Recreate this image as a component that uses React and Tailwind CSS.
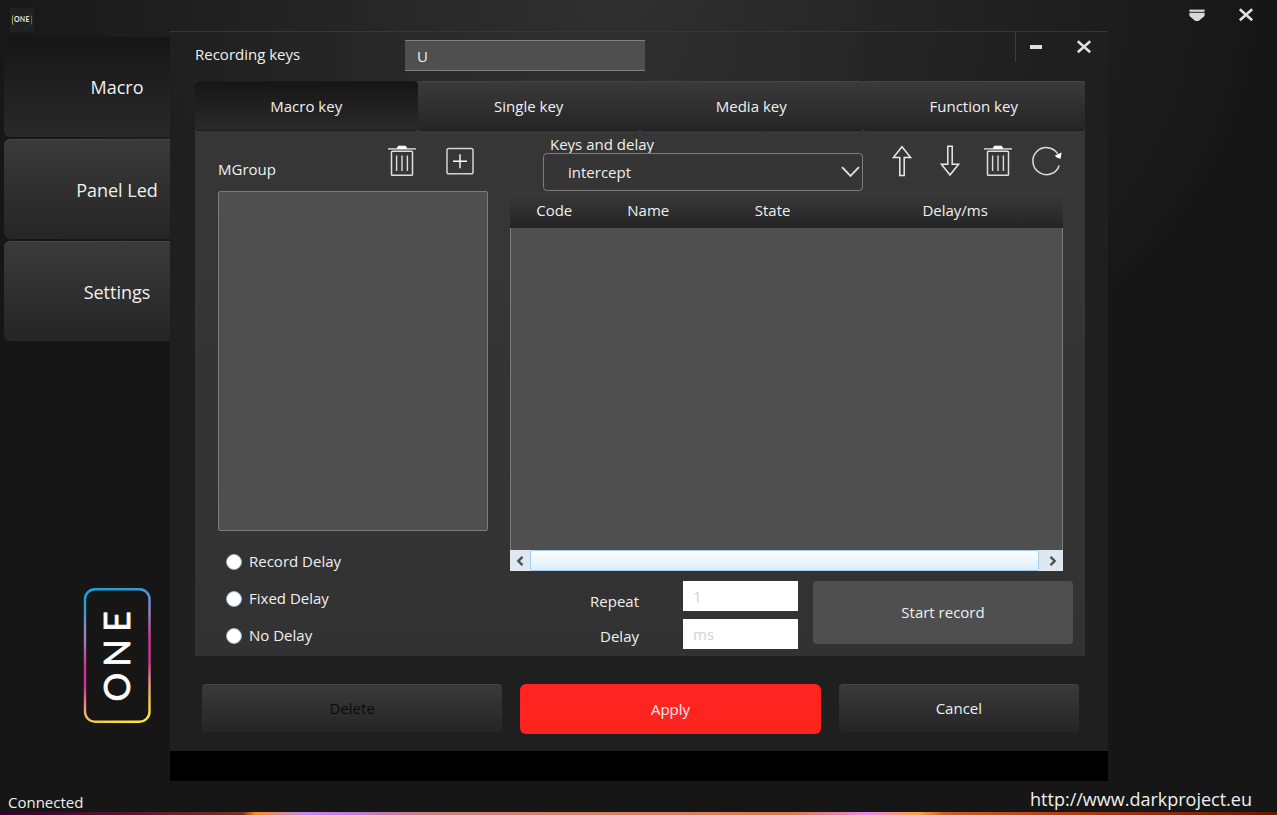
import { useState } from "react";

const raised =
  "bg-linear-to-b from-[#3a3a3a] to-[#252525] border-t border-t-[#464646]";

function TrashIcon() {
  return (
    <svg width="30" height="32" viewBox="0 0 30 32" fill="none" stroke="#dedede" aria-hidden="true">
      <path d="M1 3.9H29" strokeWidth="1.4" />
      <path d="M10.2 3.4 11.4 1.2H18.6L19.8 3.4Z" fill="#fff" stroke="#fff" strokeWidth="1" />
      <rect x="4.5" y="6.3" width="21" height="24" rx="0.8" strokeWidth="1.5" />
      <path d="M9.6 10.5V26M15 10.5V26M20.4 10.5V26" strokeWidth="1.4" />
    </svg>
  );
}

function AddIcon() {
  return (
    <svg width="28" height="28" viewBox="0 0 28 28" fill="none" aria-hidden="true">
      <rect x="1" y="1.4" width="26" height="25.4" rx="1.8" stroke="#d4d4d4" strokeWidth="1.5" />
      <path d="M14 7.2V21.2M7 14.2H21" stroke="#fff" strokeWidth="1.4" />
    </svg>
  );
}

function UpIcon() {
  return (
    <svg width="22" height="32" viewBox="0 0 22 32" fill="none" stroke="#eaeaea" strokeWidth="1.5" aria-hidden="true">
      <path d="M11 1.8 19.6 12.6H13.2V30.5H8.8V12.6H2.4Z" />
    </svg>
  );
}

function DownIcon() {
  return (
    <svg width="22" height="32" viewBox="0 0 22 32" fill="none" stroke="#eaeaea" strokeWidth="1.5" aria-hidden="true">
      <path d="M11 30 19.6 19.2H13.2V1.3H8.8V19.2H2.4Z" />
    </svg>
  );
}

function RefreshIcon() {
  return (
    <svg width="32" height="32" viewBox="0 0 32 32" fill="none" aria-hidden="true">
      <path d="M29.2 20.4A13.5 13.5 0 1 1 27.6 8.6" stroke="#dedede" strokeWidth="1.5" />
      <path d="M24.8 10.4 31.6 7.4 30.6 13.8 27 12.8Z" fill="#fff" />
    </svg>
  );
}

function CloseIcon() {
  return (
    <svg width="16" height="14" viewBox="0 0 16 14" fill="none" aria-hidden="true">
      <path d="M1.8 1.2 14.2 12.2M14.2 1.2 1.8 12.2" stroke="#e2e2e2" strokeWidth="2.5" />
    </svg>
  );
}

function TrayIcon() {
  return (
    <svg width="16" height="14" viewBox="0 0 16 14" fill="#d8d8d8" aria-hidden="true">
      <path d="M0.4 1.6H15.6V3.8H0.4Z" />
      <path d="M0.4 4.8H15.6V8L9.6 13H6.4L0.4 8Z" />
    </svg>
  );
}

function BrandMark() {
  return (
    <svg width="24" height="24" viewBox="0 0 24 24" fontFamily="Lato, sans-serif" aria-hidden="true">
      <rect width="24" height="24" fill="#212121" />
      <path d="M3.6 7.5Q2.4 8 2.4 9V15Q2.4 16 3.8 16.4" fill="none" stroke="#c9a227" strokeWidth="1" />
      <path d="M20.4 7.5Q21.6 8 21.6 9V15Q21.6 16 20.4 16.4" fill="none" stroke="#2a7ba6" strokeWidth="1" />
      <g fontSize="7" fontWeight="700" fill="#f0f0f0" textAnchor="middle">
        <text x="6.8" y="14.2">O</text>
        <text x="12.4" y="14.2" fill="#cfcfcf">N</text>
        <text x="17.4" y="14.2">E</text>
      </g>
    </svg>
  );
}

function BrandLogo() {
  return (
    <svg width="68" height="136" viewBox="0 0 68 136" fontFamily="Lato, sans-serif" role="img" aria-label="ONE">
      <defs>
        <linearGradient id="edge" gradientUnits="userSpaceOnUse" x1="8" y1="0" x2="60" y2="136">
          <stop offset="0" stopColor="#12a5e0" />
          <stop offset="0.12" stopColor="#2f9bd6" />
          <stop offset="0.3" stopColor="#9a86c4" />
          <stop offset="0.5" stopColor="#d4308c" />
          <stop offset="0.62" stopColor="#d4308c" />
          <stop offset="0.76" stopColor="#eb9a86" />
          <stop offset="0.96" stopColor="#ffe82a" />
        </linearGradient>
      </defs>
      <rect x="2" y="2.2" width="64.5" height="132.5" rx="10" fill="none" stroke="url(#edge)" strokeWidth="2.4" />
      <g fill="#fff" stroke="#fff" strokeWidth="0.7" fontSize="36" textAnchor="middle">
        <text transform="translate(47.4 100) rotate(-90)">O</text>
        <text transform="translate(47.4 66) rotate(-90)">N</text>
        <text transform="translate(47.4 34.5) rotate(-90)">E</text>
      </g>
    </svg>
  );
}

function SideButton({ active, children }) {
  return (
    <button
      type="button"
      className={
        "h-[100px] w-full rounded-md text-lg " +
        (active ? "bg-linear-to-b from-[#161616] to-[#292929]" : raised)
      }
    >
      {children}
    </button>
  );
}

function ToolButton({ label, children }) {
  return (
    <button type="button" aria-label={label} className="flex h-8 w-12 items-center justify-center">
      {children}
    </button>
  );
}

const tabs = ["Macro key", "Single key", "Media key", "Function key"];
const delays = ["Record Delay", "Fixed Delay", "No Delay"];

function MacroDialog() {
  const [tab, setTab] = useState("Macro key");
  return (
    <section
      aria-label="Recording keys"
      className="mr-[169px] flex min-w-0 flex-1 flex-col border-t border-t-[#363636] bg-[#1f1f1f] bg-[radial-gradient(ellipse_440px_360px_at_46%_0,#303030,#1f1f1f)]"
    >
      <div className="flex h-[49px] pl-[25px]">
        <label htmlFor="key" className="w-[210px] pt-[11px]">Recording keys</label>
        <input
          id="key"
          defaultValue="U"
          className="mt-2 h-[31px] w-60 border-y border-y-[#808080] bg-[#4f4f4f] px-3 outline-none"
        />
        <div className="ml-auto flex h-[30px] gap-1 border-l border-l-[#3c3c3c]">
          <button type="button" aria-label="Minimize" className="flex w-10 items-center justify-center">
            <svg width="12" height="4" aria-hidden="true"><rect width="12" height="4" fill="#e0e0e0" /></svg>
          </button>
          <button type="button" aria-label="Close dialog" className="flex w-12 items-center justify-center">
            <CloseIcon />
          </button>
        </div>
      </div>

      <div className="ml-[25px] mr-[23px] flex flex-1 flex-col bg-linear-to-b from-[#373737] to-[#323232]">
        <div role="tablist" className="flex h-[50px]">
          {tabs.map((name) => (
            <button
              key={name}
              type="button"
              role="tab"
              aria-selected={tab === name}
              onClick={() => setTab(name)}
              className={
                "flex-1 rounded-sm border-b border-b-[#1c1c1c] pt-px " +
                (tab === name
                  ? "border-t border-t-[#1a1a1a] bg-linear-to-b from-[#161616] to-[#2a2a2a]"
                  : raised)
              }
            >
              {name}
            </button>
          ))}
        </div>

        <div className="flex flex-1 gap-[22px] pl-[23px] pr-3">
          <div className="flex w-[270px] flex-col">
            <div className="flex h-[60px] items-start pr-1 pt-[14px]">
              <h2 className="pt-[13px]">MGroup</h2>
              <div className="ml-auto flex gap-[10px]">
                <ToolButton label="Delete group"><TrashIcon /></ToolButton>
                <ToolButton label="Add group"><AddIcon /></ToolButton>
              </div>
            </div>
            <div role="listbox" aria-label="MGroup" className="flex-1 rounded-xs border border-[#7c7c7c] bg-[#4f4f4f]" />
            <fieldset className="h-[125px] pl-2 pt-3">
              {delays.map((name) => (
                <label key={name} className="flex h-[37px] items-center gap-[7px]">
                  <input
                    type="radio"
                    name="delay-mode"
                    className="size-4 appearance-none rounded-full border border-[#9db4c4] bg-white checked:border-4 checked:border-[#2f86b5]"
                  />
                  {name}
                </label>
              ))}
            </fieldset>
          </div>

          <div className="flex min-w-0 flex-1 flex-col">
            <div className="flex h-[61px] gap-[15px] pl-[33px] pr-[3px]">
              <div className="flex flex-1 flex-col pt-[3px]">
                <label htmlFor="action" className="h-[19px] pl-[7px] leading-5">Keys and delay</label>
                <div className="relative h-[38px]">
                  <select
                    id="action"
                    className="h-full w-full appearance-none rounded-sm border border-[#7c7c7c] bg-[#353535] pl-6 outline-none"
                  >
                    <option>intercept</option>
                  </select>
                  <svg className="pointer-events-none absolute right-[3px] top-[13px]" width="19" height="12" viewBox="0 0 19 12" fill="none" aria-hidden="true">
                    <path d="M1 1.2 9.5 9.8 18 1.2" stroke="#e0e0e0" strokeWidth="1.9" />
                  </svg>
                </div>
              </div>
              <div className="flex pt-[14px]">
                <ToolButton label="Move up"><UpIcon /></ToolButton>
                <ToolButton label="Move down"><DownIcon /></ToolButton>
                <ToolButton label="Delete key"><TrashIcon /></ToolButton>
                <ToolButton label="Reset"><RefreshIcon /></ToolButton>
              </div>
            </div>

            <div className="mr-[10px] flex flex-1 flex-col">
              <table className="w-full table-fixed">
                <thead>
                  <tr className="h-[36px] bg-linear-to-b from-[#3a3a3a] to-[#242424]">
                    <th className="w-[16%] font-normal">Code</th>
                    <th className="w-[18%] font-normal">Name</th>
                    <th className="w-[27%] font-normal">State</th>
                    <th className="font-normal">Delay/ms</th>
                  </tr>
                </thead>
                <tbody />
              </table>
              <div className="flex-1 border-x border-x-[#7c7c7c] bg-[#4f4f4f]" />
            </div>
            <div className="mr-[10px] flex h-[21px] bg-[#dfe7f0]">
              <button type="button" aria-label="Scroll left" className="flex w-5 items-center justify-center">
                <svg width="8" height="10" viewBox="0 0 8 10" fill="none" aria-hidden="true">
                  <path d="M6.5 0.8 2.3 5 6.5 9.2" stroke="#505050" strokeWidth="2.4" />
                </svg>
              </button>
              <div className="flex-1 rounded-xs border border-[#a5cdeb] bg-linear-to-b from-white to-[#dcedfa]" />
              <button type="button" aria-label="Scroll right" className="flex w-6 items-center justify-center pl-1">
                <svg width="8" height="10" viewBox="0 0 8 10" fill="none" aria-hidden="true">
                  <path d="M1.5 0.8 5.7 5 1.5 9.2" stroke="#505050" strokeWidth="2.4" />
                </svg>
              </button>
            </div>

            <div className="flex h-[85px] gap-[15px] pt-[10px]">
              <div className="grid grid-cols-[129px_115px] content-start items-center gap-x-11 gap-y-2 text-right">
                <label htmlFor="repeat" className="pt-[10px] leading-5">Repeat</label>
                <input id="repeat" placeholder="1" className="h-[30px] bg-white px-[10px] text-black outline-none placeholder:text-[#d2d2d2]" />
                <label htmlFor="delay" className="pt-1">Delay</label>
                <input id="delay" placeholder="ms" className="h-[30px] bg-white px-[10px] text-black outline-none placeholder:text-[#d2d2d2]" />
              </div>
              <button type="button" className="h-[63px] flex-1 rounded-sm bg-[#4f4f4f]">Start record</button>
            </div>
          </div>
        </div>
      </div>

      <div className="grid h-[95px] grid-cols-[5fr_5fr_4fr] items-start gap-[18px] pl-8 pr-[29px] pt-7">
        <button type="button" disabled className={"h-12 rounded-sm text-[#0c0c0c] " + raised}>Delete</button>
        <button type="button" className="h-[50px] rounded-md bg-[#ff2420]">Apply</button>
        <button type="button" className={"h-12 rounded-sm " + raised}>Cancel</button>
      </div>
      <div className="h-[30px] bg-black" />
    </section>
  );
}

export default function App() {
  return (
    <div className="flex min-h-screen flex-col bg-[#161616] bg-[radial-gradient(ellipse_660px_480px_at_48%_0,#303030,#161616)] font-['Open_Sans','Noto_Sans',sans-serif] text-[15px] text-[#f0f0f0]">
      <header className="flex h-[31px] items-start pl-[10px] pr-[7px]">
        <div className="pt-2"><BrandMark /></div>
        <div className="ml-auto flex gap-[1px]">
          <button type="button" aria-label="Minimize to tray" className="flex h-[30px] w-12 items-center justify-center">
            <TrayIcon />
          </button>
          <button type="button" aria-label="Close" className="flex h-[30px] w-12 items-center justify-center">
            <CloseIcon />
          </button>
        </div>
      </header>

      <main className="flex flex-1">
        <aside className="w-[170px] shrink-0 overflow-hidden">
          <div className="flex h-full w-[230px] flex-col pb-[58px] pl-1 pt-[6px]">
            <nav className="flex flex-col gap-[2px]">
              <SideButton active>Macro</SideButton>
              <SideButton>Panel Led</SideButton>
              <SideButton>Settings</SideButton>
            </nav>
            <div className="mt-auto flex justify-center"><BrandLogo /></div>
          </div>
        </aside>
        <MacroDialog />
      </main>

      <footer className="flex h-[31px] items-center justify-between pl-2 pr-[25px]">
        <span className="pt-3">Connected</span>
        <a href="http://www.darkproject.eu" className="pt-1 text-lg">http://www.darkproject.eu</a>
      </footer>
      <div className="h-[3px] bg-[linear-gradient(90deg,#38002a_0%,#5c1430_10%,#7c3022_19%,#ff8c22_20%,#c486f4_24%,#c47ad0_28%,#cc8080_33%,#da8068_48%,#dd7850_62%,#f288e4_68%,#ffa040_72%,#d25a22_74%,#a83010_87%,#6c1400_100%)]" />
    </div>
  );
}
